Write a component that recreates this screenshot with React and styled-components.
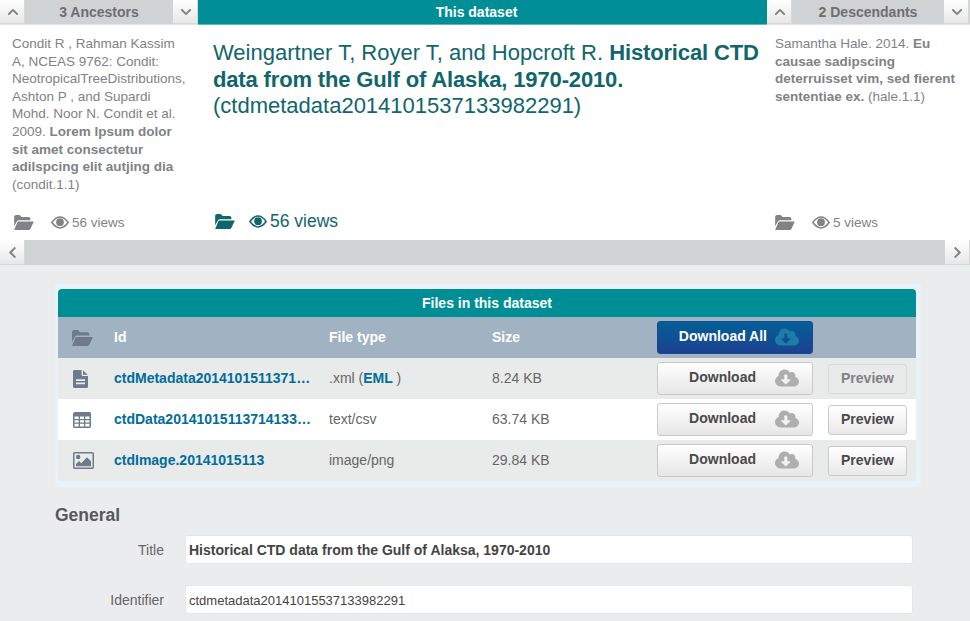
import React from 'react';
import styled, { createGlobalStyle } from 'styled-components';
import { FaChevronUp, FaChevronDown, FaChevronLeft, FaChevronRight, FaCloudDownloadAlt } from 'react-icons/fa';

const Global = createGlobalStyle`
  html, body { margin: 0; padding: 0; background: #ebecee; height: 621px; overflow: hidden; }
  body { font-family: "Liberation Sans", Arial, sans-serif; color: #555; }
`;

const Folder = ({ w = 20, h = 15 }) => (
  <svg width={w} height={h} viewBox="0 0 21 16" fill="currentColor">
    <path d="M0 2.2C0 1 1 0 2.2 0h3.6l2.2 2.2h7.2c1.2 0 2.1.9 2.1 2.1v1.2H5.2c-1 0-1.7.4-2.2 1.2L0 12z" />
    <path d="M4.8 7h16.2l-3.6 7.6c-.4.9-1.1 1.4-2.1 1.4H0l3.2-7.8c.3-.8.8-1.2 1.6-1.2z" />
  </svg>
);
const Eye = ({ w = 18, h = 13 }) => (
  <svg width={w} height={h} viewBox="0 0 20 14">
    <path d="M1 7C4 2.8 7 1 10 1s6 1.8 9 6c-3 4.2-6 6-9 6S4 11.2 1 7z" fill="none" stroke="currentColor" strokeWidth="1.7" />
    <circle cx="10" cy="6.7" r="4.3" fill="currentColor" />
  </svg>
);
const FileIcon = () => (
  <svg width="15" height="18" viewBox="0 0 15 18" fill="currentColor">
    <path fillRule="evenodd" d="M1.5 0H8.6v4.6c0 .9.6 1.5 1.5 1.5H15v10.4c0 .9-.6 1.5-1.5 1.5h-12C.6 18 0 17.4 0 16.5v-15C0 .6.6 0 1.5 0zM3 9.2v1.7h9V9.2zM3 12.6v1.7h9v-1.7z" />
    <path d="M10 .3 14.7 4.8H10z" />
  </svg>
);
const TableIcon = () => (
  <svg width="18" height="16" viewBox="0 0 18 16" fill="currentColor">
    <path fillRule="evenodd" d="M1.8 0h14.4C17.2 0 18 .8 18 1.8v12.4c0 1-.8 1.8-1.8 1.8H1.8C.8 16 0 15.2 0 14.2V1.8C0 .8.8 0 1.8 0zM1.5 4.4v2.6h4.2V4.4zM7 4.4v2.6h4V4.4zM12.3 4.4v2.6h4.2V4.4zM1.5 8.2v2.4h4.2V8.2zM7 8.2v2.4h4V8.2zM12.3 8.2v2.4h4.2V8.2zM1.5 11.8v2.7h4.2v-2.7zM7 11.8v2.7h4v-2.7zM12.3 11.8v2.7h4.2v-2.7z" />
  </svg>
);
const ImageIcon = () => (
  <svg width="21" height="17" viewBox="0 0 21 17" fill="currentColor">
    <path fillRule="evenodd" d="M1.8 0h17.4C20.2 0 21 .8 21 1.8v13.4c0 1-.8 1.8-1.8 1.8H1.8C.8 17 0 16.2 0 15.2V1.8C0 .8.8 0 1.8 0zM1.5 1.5v14h18v-14z" />
    <circle cx="5.2" cy="5" r="2.2" />
    <path d="M3 14.2v-2.2l3-3 2.2 2.2 5.8-6 4 4v5z" />
  </svg>
);

const Page = styled.div`width: 970px; height: 621px; overflow: hidden;`;
const Carousel = styled.section`background: #fff; height: 265px; display: flex; flex-direction: column;`;
const Columns = styled.div`display: grid; grid-template-columns: 198px 569px 203px; height: 240px;`;
const Column = styled.div`display: flex; flex-direction: column; min-width: 0;`;
const ColumnHead = styled.div`
  height: 24px; display: flex; align-items: stretch; background: #d1d2d4;
  border-bottom: 1px solid #e3e4e6; padding-right: ${p => p.$pr || 0}px;
`;
const ArrowBtn = styled.div`
  width: 25px; flex: none; display: flex; align-items: center; justify-content: center;
  background: linear-gradient(#fff, #e6e6e6); color: #808285; font-size: 12px;
  box-shadow: inset -1px -1px 0 #d8d8d8;
`;
const ColumnLabel = styled.div`
  flex: 1; text-align: center; font-size: 14px; font-weight: bold; line-height: 24px; color: #6d6e71;
`;
const MainHead = styled.div`
  height: 24px; background: #008e96; border-bottom: 1px solid #63b6ba; color: #fff; text-align: center;
  font-size: 14px; font-weight: bold; line-height: 24px; padding-right: 12px;
`;
const Citation = styled.div`
  flex: 1; padding: ${p => p.$main ? '15px 0 0 15px' : '10px 8px 0 12px'};
  font-size: ${p => p.$main ? '22px' : '13.5px'}; line-height: ${p => p.$main ? '26.5px' : '17.6px'};
  color: ${p => p.$main ? '#10666a' : '#808285'};
  b { font-weight: bold; letter-spacing: ${p => p.$main ? '-0.15px' : '0'}; }
  padding-left: ${p => p.$pl || (p.$main ? 15 : 12)}px;
`;
const Meta = styled.div`
  height: 27px; display: flex; align-items: center; gap: ${p => p.$main ? 14 : 17}px;
  padding: 0 0 ${p => p.$main ? 5 : 4}px ${p => p.$pl}px; font-size: ${p => p.$main ? '17.5px' : '13.5px'};
  color: ${p => p.$main ? '#10666a' : '#808285'};
  svg { flex: none; }
`;
const Views = styled.span`display: inline-flex; align-items: center; gap: 3px;`;
const ScrollBar = styled.div`height: 25px; background: #d1d2d4; display: flex; justify-content: space-between;`;
const ScrollBtn = styled(ArrowBtn)`font-size: 13px;`;

const Body = styled.div`padding: 19px 49px 0 55px;`;
const FilesFrame = styled.div`
  background: #e8f2f8; padding: 5px 5px 6px 3px;
`;
const FilesHead = styled.div`
  height: 28px; background: #008e96; border-radius: 4px 4px 0 0; color: #fff; text-align: center;
  font-size: 14px; font-weight: bold; line-height: 29px;
`;
const Row = styled.div`
  display: grid; grid-template-columns: 56px 215px 163px 165px 171px 79px; align-items: center; height: 41px;
  background: ${p => p.$bg}; font-size: 14px; color: #666;
  ${p => p.$last && 'border-radius: 0 0 4px 4px;'}
`;
const IconCell = styled.div`padding-left: ${p => p.$pl || 15}px; color: #6d7b8a; display: flex;`;
const TextCell = styled.div`margin-bottom: 2px;`;
const HeadText = styled(TextCell)`color: #fff; font-weight: bold;`;
const FileLink = styled.a`
  color: #006d9a; font-weight: bold; white-space: nowrap; overflow: hidden; text-overflow: ellipsis; padding-right: 15px; margin-bottom: 2px;
`;
const TypeLink = styled.b`color: #006d9a;`;
const Btn = styled.div`
  width: 156px; height: 33px; box-sizing: border-box; border: 1px solid #c9c9c9; border-radius: 3px;
  background: linear-gradient(#fff, #e6e6e6); display: flex; align-items: center; justify-content: flex-end; gap: 19px;
  padding: 0 13px 3px 0; font-size: 14px; font-weight: bold; color: #4a4a4a;
  svg { color: #aeaeae; margin-top: 2px; }
`;
const AllBtn = styled(Btn)`
  border: 1px solid #1a4a90; background: linear-gradient(#035f98, #1c4290); color: #fff; gap: 8px;
  svg { color: #1b7da8; }
`;
const PreviewBtn = styled.div`
  width: 79px; height: 30px; box-sizing: border-box; border: 1px solid ${p => p.$off ? '#d8d8d8' : '#c9c9c9'}; border-radius: 3px;
  background: ${p => p.$off ? '#e9eaea' : 'linear-gradient(#fff, #e9e9e9)'};
  color: ${p => p.$off ? '#808285' : '#4a4a4a'};
  text-align: center; font-size: 14px; font-weight: bold; line-height: 27px;
`;
const General = styled.h2`margin: 18px 0 0 0; font-size: 17.5px; line-height: 20px; font-weight: bold; color: #58595b;`;
const Field = styled.div`display: flex; align-items: center; margin-top: ${p => p.$mt}px; width: 858px;`;
const Label = styled.div`width: 109px; text-align: right; font-size: 14px; color: #666; margin-right: 21px;`;
const Value = styled.div`
  flex: 1; height: 29px; box-sizing: border-box; background: #fff; border: 1px solid #e4e6ec; border-radius: 3px;
  padding-left: 3px; line-height: 29px; font-size: ${p => p.$bold ? '14px' : '13px'}; color: #444; font-weight: ${p => p.$bold ? 'bold' : 'normal'};
`;

const files = [
  { icon: <FileIcon />, id: 'ctdMetadata20141015113714133.xml', type: <>.xml (<TypeLink>EML </TypeLink>)</>, size: '8.24 KB', off: true, bg: '#e9eaea' },
  { icon: <TableIcon />, id: 'ctdData20141015113714133.csv.data', type: 'text/csv', size: '63.74 KB', bg: '#fff' },
  { icon: <ImageIcon />, id: 'ctdImage.20141015113', type: 'image/png', size: '29.84 KB', bg: '#e9eaea', last: true },
];

export default function App() {
  return (
    <Page>
      <Global />
      <Carousel>
        <Columns>
          <Column>
            <ColumnHead>
              <ArrowBtn><FaChevronUp /></ArrowBtn>
              <ColumnLabel>3 Ancestors</ColumnLabel>
              <ArrowBtn><FaChevronDown /></ArrowBtn>
            </ColumnHead>
            <Citation>
              Condit R , Rahman Kassim A, NCEAS 9762: Condit: NeotropicalTreeDistributions, Ashton P , and Supardi Mohd. Noor N. Condit et al. 2009. <b>Lorem Ipsum dolor sit amet consectetur adilspcing elit autjing dia</b> (condit.1.1)
            </Citation>
            <Meta $pl={14}>
              <Folder />
              <Views><Eye />56 views</Views>
            </Meta>
          </Column>
          <Column>
            <MainHead>This dataset</MainHead>
            <Citation $main>
              Weingartner T, Royer T, and Hopcroft R. <b>Historical CTD data from the Gulf of Alaska, 1970-2010.</b> (ctdmetadata2014101537133982291)
            </Citation>
            <Meta $main $pl={17}>
              <Folder />
              <Views><Eye />56 views</Views>
            </Meta>
          </Column>
          <Column>
            <ColumnHead $pr={1}>
              <ArrowBtn><FaChevronUp /></ArrowBtn>
              <ColumnLabel>2 Descendants</ColumnLabel>
              <ArrowBtn><FaChevronDown /></ArrowBtn>
            </ColumnHead>
            <Citation $pl={8}>
              Samantha Hale. 2014. <b>Eu causae sadipscing deterruisset vim, sed fierent sententiae ex.</b> (hale.1.1)
            </Citation>
            <Meta $pl={8}>
              <Folder />
              <Views><Eye />5 views</Views>
            </Meta>
          </Column>
        </Columns>
        <ScrollBar>
          <ScrollBtn><FaChevronLeft /></ScrollBtn>
          <ScrollBtn><FaChevronRight /></ScrollBtn>
        </ScrollBar>
      </Carousel>
      <Body>
        <FilesFrame>
          <FilesHead>Files in this dataset</FilesHead>
          <Row $bg="#a1b3c2">
            <IconCell $pl={14}><Folder w={21} h={16} /></IconCell>
            <HeadText>Id</HeadText>
            <HeadText>File type</HeadText>
            <HeadText>Size</HeadText>
            <AllBtn>Download All<FaCloudDownloadAlt size={24} /></AllBtn>
            <div />
          </Row>
          {files.map(f => (
            <Row key={f.id} $bg={f.bg} $last={f.last}>
              <IconCell>{f.icon}</IconCell>
              <FileLink>{f.id}</FileLink>
              <TextCell>{f.type}</TextCell>
              <TextCell>{f.size}</TextCell>
              <Btn>Download<FaCloudDownloadAlt size={24} /></Btn>
              <PreviewBtn $off={f.off}>Preview</PreviewBtn>
            </Row>
          ))}
        </FilesFrame>
        <General>General</General>
        <Field $mt={10}><Label>Title</Label><Value $bold>Historical CTD data from the Gulf of Alaksa, 1970-2010</Value></Field>
        <Field $mt={21}><Label>Identifier</Label><Value>ctdmetadata20141015537133982291</Value></Field>
      </Body>
    </Page>
  );
}
